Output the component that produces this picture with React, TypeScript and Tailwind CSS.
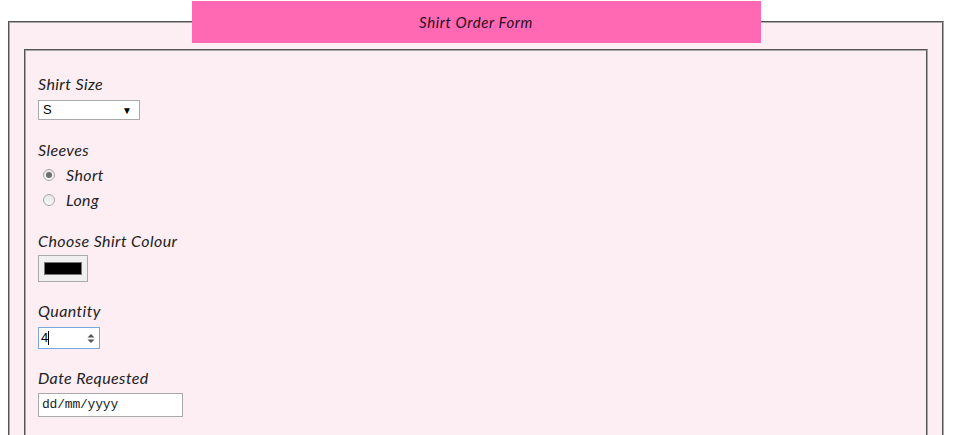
import React from "react";

const hand = { fontFamily: '"Lato", "Open Sans", sans-serif' };

function Label({ children }: { children: React.ReactNode }) {
  return (
    <div className="h-[24px] leading-[24px] text-[16px] tracking-[0.4px] italic text-[#222]" style={hand}>
      {children}
    </div>
  );
}

function Radio({ checked, label }: { checked?: boolean; label: string }) {
  return (
    <div className="h-[25px] flex items-center pl-[5px]">
      <span className="w-[12px] h-[12px] rounded-full border border-[#a6a6a6] bg-gradient-to-b from-[#e8e8e8] to-[#f6f6f6] flex items-center justify-center">
        {checked && <span className="w-[6px] h-[6px] rounded-full bg-[#6e6e6e]" />}
      </span>
      <span className="ml-[11px] text-[16px] tracking-[0.4px] italic text-[#222]" style={hand}>
        {label}
      </span>
    </div>
  );
}

export default function App() {
  return (
    <div className="w-[956px] h-[435px] overflow-hidden bg-white">
      <fieldset className="ml-[8px] mt-[1px] w-[936px] border-2 [border-style:groove] border-[#a8a8a8] bg-[#fdeef4] px-[14px] pb-[40px]">
        <legend className="mx-auto w-[569px] h-[42px] bg-[#ff69b4] flex items-center justify-center">
          <span className="text-[15px] tracking-[0.6px] italic text-[#2a1020] w-[569px] text-center" style={hand}>
            Shirt Order Form
          </span>
        </legend>
        <div className="mt-[6px] border-2 [border-style:groove] border-[#a8a8a8] pl-[12px] pt-[21px] pb-[40px]">
          <Label>Shirt Size</Label>
          <div className="mt-[4px] w-[102px] h-[20px] bg-white border border-[#a9a9a9] flex items-center justify-between pl-[4px] pr-[7px]">
            <span className="text-[13px] text-black" style={{ fontFamily: '"Liberation Sans", Arial, sans-serif' }}>
              S
            </span>
            <span className="text-[10px] text-black leading-none">▼</span>
          </div>

          <div className="mt-[18px]">
            <Label>Sleeves</Label>
            <Radio checked label="Short" />
            <Radio label="Long" />
          </div>

          <div className="mt-[17px]">
            <Label>Choose Shirt Colour</Label>
            <div className="mt-[2px] w-[50px] h-[27px] bg-[#f0f0f0] border border-[#a9a9a9] flex items-center justify-center">
              <div className="w-[38px] h-[13px] bg-black border border-[#777]" />
            </div>
          </div>

          <div className="mt-[17px]">
            <Label>Quantity</Label>
            <div className="mt-[4px] w-[62px] h-[22px] bg-white border border-[#7aa7e0] flex items-center pl-[2px] pr-[4px] justify-between">
              <span className="flex items-center text-[13px] text-black" style={{ fontFamily: '"Liberation Sans", Arial, sans-serif' }}>
                4<span className="w-px h-[14px] bg-black" />
              </span>
              <svg width="8" height="11" viewBox="0 0 8 11">
                <path d="M4 1 L7.5 4.5 H0.5 Z" fill="#555" />
                <path d="M4 10 L7.5 6.5 H0.5 Z" fill="#555" />
              </svg>
            </div>
          </div>

          <div className="mt-[17px]">
            <Label>Date Requested</Label>
            <div className="mt-[3px] w-[145px] h-[24px] bg-white border border-[#a9a9a9] flex items-center pl-[3px]">
              <span className="text-[13px] text-[#222] tracking-[-0.2px]" style={{ fontFamily: '"Liberation Mono", monospace' }}>
                dd/mm/yyyy
              </span>
            </div>
          </div>
        </div>
      </fieldset>
    </div>
  );
}
